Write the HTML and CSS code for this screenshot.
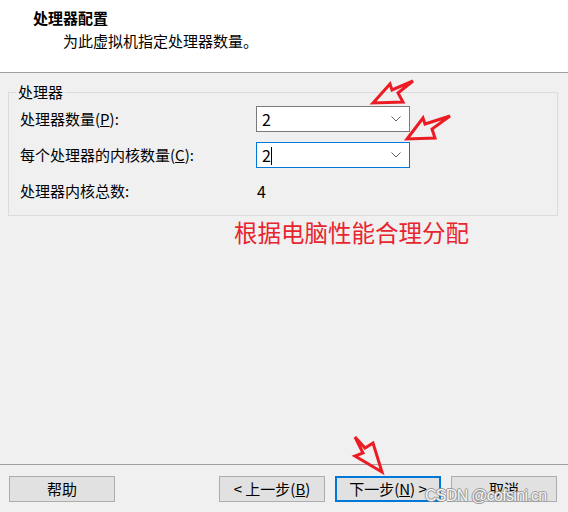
FILE: index.html
```html
<!DOCTYPE html>
<html>
<head>
    <meta charset="utf-8">
    <title>处理器配置</title>
    <link rel="stylesheet" href="styles.css">
</head>
<body>

<div class="wizard">
    <div class="header">
        <div class="title">处理器配置</div>
        <div class="subtitle">为此虚拟机指定处理器数量。</div>
    </div>

    <div class="content">
        <fieldset class="group">
            <legend>处理器</legend>
            <div class="row">
                <label>处理器数量(<u>P</u>):</label>
                <div class="combo">
                    <span>2</span>
                    <svg class="chev" width="10" height="6" viewBox="0 0 10 6"><path d="M0.5 0.5 L5 5 L9.5 0.5" fill="none" stroke="#606060" stroke-width="1"/></svg>
                </div>
            </div>
            <div class="row">
                <label>每个处理器的内核数量(<u>C</u>):</label>
                <div class="combo focus">
                    <span>2<i class="caret"></i></span>
                    <svg class="chev" width="10" height="6" viewBox="0 0 10 6"><path d="M0.5 0.5 L5 5 L9.5 0.5" fill="none" stroke="#606060" stroke-width="1"/></svg>
                </div>
            </div>
            <div class="row">
                <label>处理器内核总数:</label>
                <div class="value">4</div>
            </div>
        </fieldset>
        <div class="note">根据电脑性能合理分配</div>
    </div>

    <div class="footer">
        <button class="btn">帮助</button>
        <div class="nav">
            <button class="btn">&lt; 上一步(<u>B</u>)</button>
            <button class="btn primary">下一步(<u>N</u>) &gt;</button>
            <button class="btn">取消</button>
        </div>
    </div>

    <!-- annotation arrows -->
    <svg class="marks" width="568" height="512" viewBox="0 0 568 512">
        <g fill="none" stroke="#ec1c24" stroke-width="3" stroke-linejoin="miter">
            <path d="M373 103 L390 84 L392 90 L413 81 L398 93 L403 102 Z"/>
            <path d="M407 139 L423 118 L425 124 L450 116 L432 129 L435 138 Z"/>
            <path d="M355 437 L365 448 L373 443 L382 472 L355 456 L363 453 Z"/>
        </g>
    </svg>
    <div class="watermark">CSDN @cofsini.cn</div>
</div>

</body>
</html>
```

FILE: styles.css
```css
body {
    margin: 0;
    font-family: "Noto Sans CJK SC", "Noto Sans", sans-serif;
    font-size: 15px;
    color: #000;
    background-color: #f0f0f0;
}

.wizard {
    position: relative;
    width: 568px;
    height: 512px;
    display: flex;
    flex-direction: column;
    overflow: hidden;
}

.header {
    background-color: #fff;
    border-bottom: 1px solid #a0a0a0;
    box-sizing: border-box;
    height: 73px;
    padding: 8px 0 0 33px;
}

.title {
    font-weight: bold;
    line-height: 20px;
}

.subtitle {
    margin: 3px 0 0 30px;
    line-height: 20px;
}

.content {
    flex: 1;
}

.group {
    margin: 9px 10px 0 8px;
    padding: 4px 10px 11px 7px;
    border: 1px solid #dcdcdc;
}

.group legend {
    padding: 0 2px;
    line-height: 20px;
}

.row {
    display: grid;
    grid-template-columns: 236px 154px;
    align-items: center;
    height: 26px;
    padding-left: 4px;
    margin-bottom: 10px;
}

.row:last-child {
    margin-bottom: 0;
}

.row label {
    line-height: 20px;
}

.combo {
    height: 26px;
    box-sizing: border-box;
    background-color: #fff;
    border: 1px solid #7a7a7a;
    display: flex;
    align-items: center;
    justify-content: space-between;
    padding: 0 8px 0 5px;
    font-size: 16px;
}

.combo.focus {
    border-color: #0078d7;
}

.caret {
    display: inline-block;
    width: 1px;
    height: 18px;
    background-color: #000;
    vertical-align: -3px;
}

.chev {
    display: block;
}

.value {
    padding-left: 1px;
    font-size: 16px;
}

.note {
    margin: 0 0 0 234px;
    color: #e8252e;
    font-size: 23.5px;
    line-height: 32px;
}

.footer {
    height: 48px;
    box-sizing: border-box;
    border-top: 1px solid #a0a0a0;
    padding: 11px 11px 0 9px;
    display: flex;
    justify-content: space-between;
}

.nav {
    display: flex;
    gap: 10px;
}

.btn {
    width: 106px;
    height: 26px;
    box-sizing: border-box;
    background-color: #e1e1e1;
    border: 1px solid #adadad;
    font-family: "Noto Sans CJK SC", "Noto Sans", sans-serif;
    font-size: 15px;
    line-height: 20px;
    padding: 0;
    color: #000;
}

.btn.primary {
    border: 2px solid #0078d7;
}

.marks {
    position: absolute;
    left: 0;
    top: 0;
    pointer-events: none;
}

.watermark {
    position: absolute;
    left: 425px;
    top: 487px;
    font-family: "Liberation Sans", Arial, sans-serif;
    font-size: 16px;
    letter-spacing: -0.7px;
    line-height: 18px;
    color: rgba(255, 255, 255, 0.9);
    text-shadow: 1px 0 0 #999, -1px 0 0 #999, 0 1px 0 #999, 0 -1px 0 #999;
}
```
